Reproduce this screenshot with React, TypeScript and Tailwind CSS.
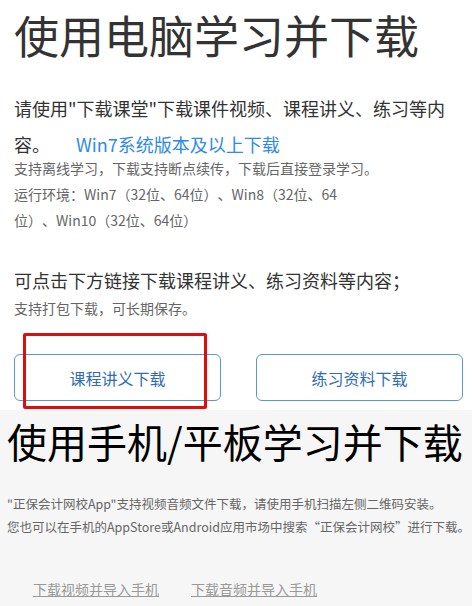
import React from "react";

// 下载说明页：电脑端 + 手机/平板端
export default function App() {
  return (
    <div className="w-[472px] h-[606px] overflow-hidden bg-white font-['Noto_Sans_CJK_SC',sans-serif] [text-spacing-trim:space-all]">
      {/* 电脑端下载 */}
      <section className="relative h-[410px] pl-[14px] pt-[2px]">
        <h1 className="text-[45px] leading-[66px] text-[#333] whitespace-nowrap">使用电脑学习并下载</h1>

        <p className="mt-[22px] h-[65px] w-[446px] text-[18px] leading-[36px] text-[#333]">
          请使用"下载课堂"下载课件视频、课程讲义、练习等内容。
          <a className="inline-block ml-[26px] leading-[22px] text-[#2f8ae5] cursor-pointer">Win7系统版本及以上下载</a>
        </p>

        <div className="text-[14px] leading-[26px] text-[#666] whitespace-nowrap">
          <p>支持离线学习，下载支持断点续传，下载后直接登录学习。</p>
          <p>
            运行环境：Win7（32位、64位）、Win8（32位、64
            <br />
            位）、Win10（32位、64位）
          </p>
        </div>

        <p className="mt-[32px] text-[18px] leading-[30px] text-[#333]">可点击下方链接下载课程讲义、练习资料等内容；</p>
        <p className="text-[14px] leading-[26px] text-[#666]">支持打包下载，可长期保存。</p>

        <div className="mt-[33px] flex gap-[35px]">
          <button className="w-[207px] h-[47px] rounded-[6px] border border-[#5b98d2] text-[16px] text-[#2e6db3]">
            课程讲义下载
          </button>
          <button className="w-[207px] h-[47px] rounded-[6px] border border-[#5b98d2] text-[16px] text-[#2e6db3]">
            练习资料下载
          </button>
        </div>

        {/* 红色标注框 */}
        <div className="absolute left-[23px] top-[333px] w-[184px] h-[76px] border-[3px] border-[#e00d0d] rounded-[2px] pointer-events-none" />
      </section>

      {/* 手机/平板下载 */}
      <section className="h-[196px] bg-[#f6f6f6] pl-[7px]">
        <h2 className="pt-[6px] text-[40px] leading-[50px] text-black whitespace-nowrap">使用手机/平板学习并下载</h2>
        <div className="mt-[26px] text-[12.5px] leading-[23px] text-[#666] whitespace-nowrap">
          <p>"正保会计网校App"支持视频音频文件下载，请使用手机扫描左侧二维码安装。</p>
          <p>您也可以在手机的AppStore或Android应用市场中搜索“正保会计网校”进行下载。</p>
        </div>
        <div className="mt-[41px] ml-[26px] flex gap-[32px] text-[14px] leading-[20px] text-[#999]">
          <a className="underline cursor-pointer">下载视频并导入手机</a>
          <a className="underline cursor-pointer">下载音频并导入手机</a>
        </div>
      </section>
    </div>
  );
}
